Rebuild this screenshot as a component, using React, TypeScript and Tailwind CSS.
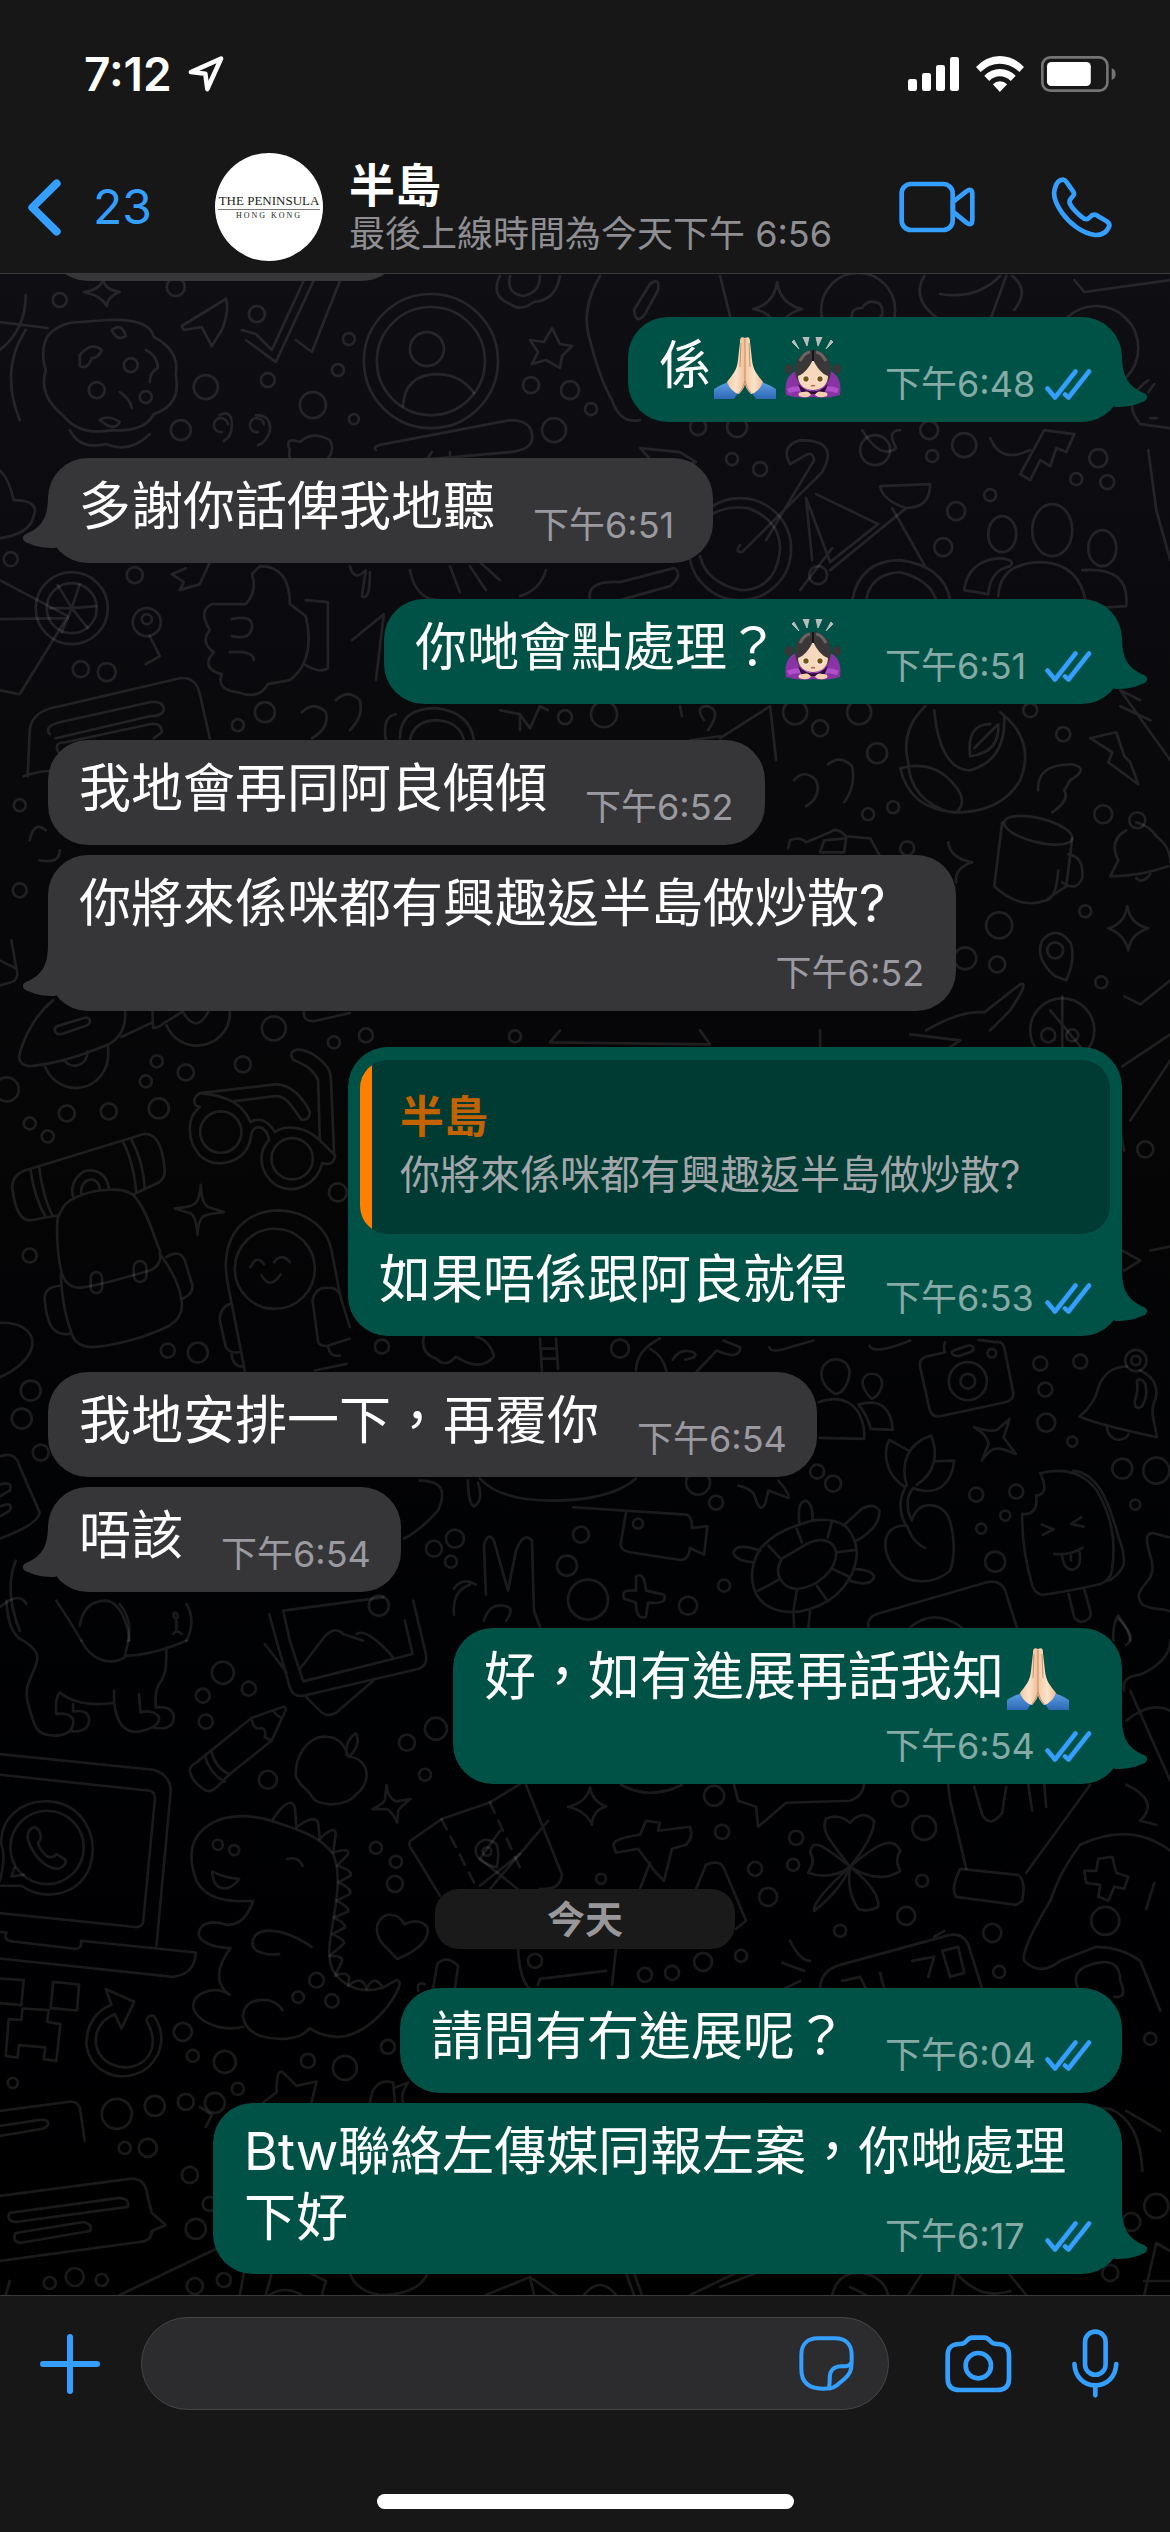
import React from 'react';
import clsx from 'clsx';

type Part = string | { emoji: 'pray' | 'bow' };

interface Message {
  id: number;
  out?: boolean;
  parts: Part[];
  time: string;
  // where the time sits relative to the text
  layout?: 'inline' | 'below' | 'wrap';
  tail?: boolean;
  quote?: { name: string; text: string };
}

const EARLIER: Message[] = [
  { id: 1, out: true, parts: ['係', { emoji: 'pray' }, { emoji: 'bow' }], time: '下午6:48', tail: true },
  { id: 2, parts: ['多謝你話俾我地聽'], time: '下午6:51', tail: true },
  { id: 3, out: true, parts: ['你哋會點處理？', { emoji: 'bow' }], time: '下午6:51', tail: true },
  { id: 4, parts: ['我地會再同阿良傾傾'], time: '下午6:52' },
  { id: 5, parts: ['你將來係咪都有興趣返半島做炒散?'], time: '下午6:52', layout: 'below', tail: true },
  {
    id: 6,
    out: true,
    parts: ['如果唔係跟阿良就得'],
    time: '下午6:53',
    tail: true,
    quote: { name: '半島', text: '你將來係咪都有興趣返半島做炒散?' },
  },
  { id: 7, parts: ['我地安排一下，再覆你'], time: '下午6:54' },
  { id: 8, parts: ['唔該'], time: '下午6:54', tail: true },
  { id: 9, out: true, parts: ['好，如有進展再話我知', { emoji: 'pray' }], time: '下午6:54', layout: 'below', tail: true },
];

const TODAY: Message[] = [
  { id: 10, out: true, parts: ['請問有冇進展呢？'], time: '下午6:04' },
  { id: 11, out: true, parts: ['Btw聯絡左傳媒同報左案，你哋處理下好'], time: '下午6:17', layout: 'wrap', tail: true },
];

/* --- Emoji --- */

const PrayEmoji = () => (
  <svg viewBox="0 0 66 62" className="inline-block w-[66px] h-[62px] mx-px -mt-1 align-middle" role="img" aria-label="🙏🏻">
    <defs>
      <linearGradient id="skin" x1="0" x2="1">
        <stop offset="0" stopColor="#f3c9a4" />
        <stop offset="0.5" stopColor="#fce3cb" />
        <stop offset="1" stopColor="#eebd94" />
      </linearGradient>
      <linearGradient id="cuff" x1="0" y1="0" x2="0" y2="1">
        <stop offset="0" stopColor="#5aa0e6" />
        <stop offset="1" stopColor="#2f68b4" />
      </linearGradient>
    </defs>
    <path d="M2 52C8 48 12 47 16 45L26 56L22 62H2ZM64 52C58 48 54 47 50 45L40 56L44 62H64Z" fill="url(#cuff)" />
    <path d="M33 1C29 -1 28 1 28 5L26 23C25 34 20 38 15 45Q19 55 27 57Q32 52 33 47Z" fill="url(#skin)" />
    <path d="M33 1C37 -1 38 1 38 5L40 23C41 34 46 38 51 45Q47 55 39 57Q34 52 33 47Z" fill="url(#skin)" />
    <path d="M33 2V44Q31 52 27 56M33 44Q35 52 39 56M29 6L28 30M37 6L38 30" fill="none" stroke="#c98f67" strokeWidth="1" />
  </svg>
);

const BowEmoji = () => (
  <svg viewBox="0 0 66 62" className="inline-block w-[66px] h-[62px] mx-px -mt-1 align-middle" role="img" aria-label="🙇🏻‍♀️">
    <path d="M12 5L14 3L19 12ZM23 0H29L27 9ZM36 0H42L38 9ZM51 3L53 5L46 12Z" fill="#b9bcbd" stroke="#b9bcbd" />
    <ellipse cx="9" cy="32" rx="4" ry="5" fill="#3a3536" />
    <ellipse cx="57" cy="32" rx="4" ry="5" fill="#3a3536" />
    <path d="M6 58C4 46 8 36 17 34H49C58 36 62 46 60 58Q48 62 33 60Q18 62 6 58Z" fill="#8a33a4" />
    <path d="M8 54Q20 49 30 55M58 54Q46 49 36 55" stroke="#b04fcc" strokeWidth="5" fill="none" />
    <path d="M18 47Q33 62 48 47L44 57H22Z" fill="#2d0d36" />
    <ellipse cx="33" cy="33" rx="18" ry="20" fill="#3b3738" />
    <path d="M18 39C24 37 30 30 33 22C36 30 42 37 48 39C48 48 41 53 33 53S18 48 18 39Z" fill="#f8d8bd" />
    <path d="M33 13V24" stroke="#161415" strokeWidth="2" />
    <path d="M20 24Q24 16 30 15M46 24Q42 16 36 15" stroke="#6b6566" strokeWidth="3" fill="none" />
    <circle cx="26" cy="42" r="3.5" fill="#fff" />
    <circle cx="40" cy="42" r="3.5" fill="#fff" />
    <circle cx="26" cy="42" r="2.7" fill="#79520f" />
    <circle cx="40" cy="42" r="2.7" fill="#79520f" />
    <path d="M31 49Q33 48 35 49" stroke="#b4705a" strokeWidth="1.5" fill="none" />
    <path d="M19 59Q17 55 23 55Q29 53 31 58Q27 62 19 59ZM47 59Q49 55 43 55Q37 53 35 58Q39 62 47 59Z" fill="#f6cfae" />
  </svg>
);

/* --- Icons --- */

const ReadTicks = () => (
  <svg viewBox="0 0 47 31" className="w-[47px] h-[31px] shrink-0" fill="none" stroke="#349fff" strokeWidth="4.5" strokeLinecap="round" strokeLinejoin="round">
    <path d="M2.5 19.5L10 28.5L30.5 2.5M20 25.5L23.5 28.5L44 2.5" />
  </svg>
);

const LocationIcon = () => (
  <svg viewBox="-2 0 110 110" className="w-9 h-9" fill="none" stroke="currentColor" strokeWidth="14" strokeLinejoin="round">
    <path d="M7 49L99 8L57 101L51 54Z" />
  </svg>
);

const SignalIcon = () => (
  <svg viewBox="141 81 153 102" className="w-[51px] h-[34px]" fill="#fff">
    <rect x="141" y="147" width="27" height="36" rx="7" />
    <rect x="183" y="129" width="27" height="54" rx="7" />
    <rect x="225" y="105" width="27" height="78" rx="7" />
    <rect x="267" y="81" width="27" height="102" rx="7" />
  </svg>
);

const WifiIcon = () => (
  <svg viewBox="345 75 145 108" className="w-12 h-9" fill="#fff">
    <path d="M345 108Q375 76 417 75Q460 76 490 108L476 123Q449 98 417 98Q385 98 359 123Z" />
    <path d="M370 134Q390 115 417 114Q445 115 465 134L450 150Q435 136 417 136Q399 136 385 150Z" />
    <path d="M396 160Q405 151 417 151Q430 151 439 160L417 183Z" />
  </svg>
);

const BatteryIcon = () => (
  <svg viewBox="540 78 226 108" className="w-[75px] h-9">
    <rect x="544" y="82" width="196" height="100" rx="24" fill="none" stroke="#747474" strokeWidth="8" />
    <rect x="558" y="96" width="132" height="72" rx="13" fill="#fff" />
    <path d="M753 115Q765 119 765 132Q765 145 753 150Z" fill="#747474" />
  </svg>
);

const BackIcon = () => (
  <svg viewBox="84 445 100 170" className="w-[33px] h-[57px]" fill="none" stroke="currentColor" strokeWidth="24" strokeLinecap="round" strokeLinejoin="round">
    <path d="M171 457L97 530L171 603" />
  </svg>
);

const VideoIcon = () => (
  <svg viewBox="115 444 228 156" className="w-[76px] h-[52px]" fill="none" stroke="currentColor" strokeWidth="14" strokeLinejoin="round">
    <rect x="123" y="453" width="153" height="138" rx="28" />
    <path d="M277 507L317 475Q335 463 335 484V560Q335 581 317 569L277 536Z" />
  </svg>
);

const PhoneIcon = () => (
  <svg viewBox="569 431 182 182" className="w-[61px] h-[61px]" fill="none" stroke="currentColor" strokeWidth="14" strokeLinejoin="round">
    <path d="M580 468C584 449 594 439 605 439Q612 440 616 447L635 474Q641 483 633 490Q622 500 625 510C632 525 654 547 669 556Q678 559 685 551Q694 540 705 545L735 563Q747 572 741 582C733 598 717 605 700 604C663 600 625 570 602 538C586 515 573 491 580 468Z" />
  </svg>
);

const PlusIcon = () => (
  <svg viewBox="0 0 60 60" className="w-[60px] h-[60px]" stroke="currentColor" strokeWidth="6" strokeLinecap="round">
    <path d="M30 3V57M3 30H57" />
  </svg>
);

const StickerIcon = () => (
  <svg viewBox="294 138 165 165" className="w-[55px] h-[55px]" fill="none" stroke="currentColor" strokeWidth="12" strokeLinejoin="round">
    <path d="M351 145H402C434 145 452 163 452 195V215C452 241 447 253 430 267L407 286C394 296 384 296 365 296C322 296 301 277 301 238V195C301 163 319 145 351 145Z" />
    <path d="M384 292C388 276 384 258 389 247C395 233 409 229 422 229C436 229 446 229 451 218" />
  </svg>
);

const CameraIcon = () => (
  <svg viewBox="735 129 199 174" className="w-[67px] h-[58px]" fill="none" stroke="currentColor" strokeWidth="14" strokeLinejoin="round">
    <path d="M742 190C742 166 754 157 777 156C803 157 796 137 816 137H852C872 137 865 157 891 156C915 157 926 166 926 190V260C926 284 913 294 889 294H779C755 294 742 284 742 260Z" />
    <circle cx="834" cy="221" r="38" />
  </svg>
);

const MicIcon = () => (
  <svg viewBox="1115 119 141 208" className="w-[47px] h-[69px]" fill="none" stroke="currentColor" strokeWidth="14" strokeLinecap="round">
    <rect x="1154" y="127" width="62" height="130" rx="31" />
    <path d="M1122 225C1124 264 1151 289 1185 289S1246 264 1248 225M1185 289V319" />
  </svg>
);

/* --- Wallpaper --- */

const DOTS = [
  [60, 300, 7], [176, 287, 9], [257, 314, 8], [349, 339, 6], [338, 370, 6], [268, 380, 7], [206, 387, 12], [181, 430, 10],
  [313, 405, 13], [354, 419, 5], [531, 385, 8], [570, 390, 9], [591, 409, 6], [554, 430, 12], [698, 427, 8], [737, 427, 10],
  [929, 430, 9], [964, 445, 12], [732, 459, 6], [760, 469, 7], [932, 456, 6], [990, 495, 6], [956, 511, 9], [943, 547, 9],
  [1098, 458, 9], [1076, 479, 6], [1107, 482, 7], [135, 575, 8], [81, 669, 8], [107, 672, 9], [11, 559, 7], [265, 712, 10],
  [238, 725, 6], [565, 717, 7], [604, 714, 13], [795, 712, 12], [820, 728, 8], [859, 712, 12], [877, 753, 10], [1030, 710, 7],
  [1063, 734, 7], [868, 814, 6], [893, 807, 6], [1103, 814, 9], [907, 848, 7], [20, 805, 6], [20, 890, 7], [999, 925, 13],
  [965, 958, 11], [997, 964, 8], [1085, 911, 6], [1101, 982, 6], [274, 1028, 12], [334, 1042, 6], [157, 1061, 6], [146, 1081, 6],
  [186, 1072, 8], [243, 1064, 8], [159, 1108, 10], [109, 1111, 8], [67, 1113, 8], [30, 1123, 6], [48, 1136, 6], [7, 1089, 12],
  [338, 1192, 9], [30, 1255, 7], [168, 1350, 7], [198, 1352, 10], [382, 1346, 7], [620, 1348, 9], [1040, 1363, 7], [1080, 1361, 7],
  [1045, 1389, 7], [1046, 1422, 9], [1072, 1441, 5], [31, 1390, 10], [22, 1418, 10], [41, 1452, 8], [1122, 1468, 10], [1156, 1470, 13],
  [698, 1482, 12], [716, 1502, 7], [817, 1471, 7], [833, 1483, 8], [976, 1494, 7], [1016, 1491, 7], [1005, 1515, 5], [981, 1528, 5],
  [995, 1561, 10], [1135, 1504, 5], [724, 1585, 6], [688, 1605, 9], [581, 1534, 8], [455, 1538, 9], [434, 1548, 8], [451, 1561, 6],
  [567, 1565, 10], [379, 1605, 10], [223, 1672, 11], [249, 1688, 7], [203, 1695, 7], [206, 1721, 7], [407, 1742, 8], [436, 1728, 11],
  [425, 1774, 6], [268, 1779, 9], [714, 1795, 10], [900, 1798, 8], [376, 1847, 6], [396, 1861, 6], [395, 1883, 8], [722, 1831, 7],
  [796, 1837, 7], [755, 1868, 7], [793, 1864, 6], [924, 1827, 12], [601, 1878, 5], [768, 1896, 9], [922, 1880, 6], [906, 1915, 9],
  [840, 1930, 6], [992, 1932, 9], [999, 1971, 6], [703, 1961, 9], [741, 1955, 6], [645, 1974, 7], [672, 1972, 7], [535, 1960, 7],
  [183, 2031, 9], [193, 2055, 6], [225, 2061, 11], [308, 2060, 7], [345, 2067, 12], [388, 2046, 7], [13, 2082, 5], [117, 2113, 15],
  [155, 2105, 10], [186, 2101, 8], [215, 2102, 10], [238, 2088, 6], [1150, 2038, 6], [148, 2147, 9], [125, 2147, 6], [190, 2174, 8],
  [196, 2228, 10], [210, 2203, 7], [75, 2276, 9], [50, 2282, 6], [102, 2279, 6], [195, 2285, 8], [224, 2279, 7], [1156, 2205, 12],
  [1131, 2221, 9], [1110, 2272, 8], [1145, 1149, 8], [1072, 1035, 6], [1048, 1035, 7], [515, 1036, 6], [366, 1035, 7],
];

const Wallpaper = () => (
  <svg
    viewBox="0 274 1170 2020"
    preserveAspectRatio="xMidYMid slice"
    className="absolute inset-0 w-full h-full"
    fill="none"
    stroke="#ffffff"
    strokeOpacity="0.1"
    strokeWidth="2.7"
    strokeLinecap="round"
    strokeLinejoin="round"
    aria-hidden="true"
  >
    {DOTS.map(([x, y, r]) => (
      <circle key={`${x}-${y}`} cx={x} cy={y} r={r} />
    ))}

    {/* cookie, contact disc, ticks, stars */}
    <path d="M48 336Q60 322 80 322L108 320Q150 318 154 337Q180 350 176 375Q182 405 154 414Q145 432 112 430Q80 436 64 416Q38 395 46 370Q40 350 48 336Z" />
    <path d="M80 355q12 -14 22 -5q-4 8 -10 8q-4 12 -12 8ZM112 330q10 -8 14 6q-8 6 -14 -6M146 350q12 6 12 18q-8 4 -8 14M120 392q10 6 12 16M100 420q8 -6 20 2q-6 10 -20 -2" />
    <circle cx="131" cy="365" r="7" /><circle cx="97" cy="390" r="8" /><circle cx="146" cy="397" r="6" />
    <path d="M0 322L48 328M26 295Q26 330 0 350M26 330Q0 370 20 420" />
    <circle cx="431" cy="361" r="67" /><circle cx="431" cy="361" r="54" /><circle cx="427" cy="349" r="17" />
    <path d="M403 406Q405 374 438 374Q462 375 474 393" />
    <path d="M182 326L226 299Q230 310 222 330L212 346L202 327L184 330Z" />
    <path d="M242 330L256 334L272 350L306 276L314 280L276 362L246 340M296 340L312 352L342 276M308 276L346 278" />
    <path d="M552 328L560 344L572 346L562 356L560 368L546 360L532 364L538 352L530 340L544 342Z" />
    <path d="M777 282Q780 304 802 309Q782 314 777 334Q774 312 753 309Q774 304 777 282Z" />
    <path d="M103 280Q106 290 120 292Q108 296 107 306Q102 296 84 292Q100 290 103 280Z" />
    <path d="M500 276Q490 296 510 304Q520 312 534 302Q556 300 560 276M510 276Q506 294 524 296Q540 292 540 276" />
    <path d="M600 276Q580 310 590 340Q600 380 612 400Q620 424 640 420M634 310L650 284Q660 276 658 290L645 314Q636 326 634 310M720 276L730 316" />
    <circle cx="858" cy="310" r="37" /><path d="M852 318Q850 308 862 308Q868 298 880 304Q888 318 870 322" />
    <path d="M924 276Q910 300 940 320Q960 350 990 320L1006 276M940 294Q976 300 1000 276M1012 276Q1030 290 1014 310M1074 280L1084 292L1170 280" />
    <circle cx="1096" cy="348" r="42" /><path d="M1148 380Q1120 400 1140 424L1170 428M1148 392l6 -8M1150 418h6" />
    <path d="M220 415q12 -6 12 10q0 12 -8 16M256 415q16 0 14 16q-4 12 -12 14M228 424a7 7 0 1 0 -6 8M264 424a7 7 0 1 0 -6 8" />
    <path d="M70 430Q80 450 106 444Q130 454 150 434M290 450Q284 436 300 442Q312 430 330 440Q340 460 304 470Q286 462 290 450Z" />
    <path d="M376 450Q372 446 384 444L510 420Q534 420 532 440Q530 450 510 452L396 462M428 458l4 -6M450 455v-3" />
    <path d="M0 470Q10 480 14 500Q40 500 34 516Q30 534 0 538M640 448L680 452L696 462L660 470L642 450" />

    {/* bicycle and people */}
    <circle cx="740" cy="549" r="51" /><path d="M700 526Q715 504 748 508Q780 520 780 549Q776 590 740 590Q706 582 700 556" />
    <path d="M740 545Q734 552 742 552L822 472Q840 440 800 440Q780 446 790 464L804 456Q812 450 814 460L766 540M816 494L878 524L830 562L806 498L812 560M880 486L930 484Q930 508 906 508Q882 500 880 486M906 508L830 570M800 590L832 548" />
    <path d="M852 600Q860 560 900 560Q944 566 950 600M866 600Q870 574 900 572Q930 580 936 600M892 508L926 568" />
    <circle cx="818" cy="575" r="9" />
    <ellipse cx="1052" cy="530" rx="20" ry="26" /><ellipse cx="1002" cy="534" rx="14" ry="18" /><ellipse cx="1102" cy="548" rx="14" ry="18" />
    <path d="M998 596Q1000 562 1042 562Q1080 564 1086 604M964 590Q968 560 1000 558Q1016 560 1010 566Q990 570 988 594ZM1082 570Q1130 566 1126 606L1096 608" />
    <path d="M1020 474L1044 430L1074 434L1066 452L1056 448L1050 466L1040 460L1030 480ZM990 438Q1000 464 1030 450M1148 450L1156 510L1170 560" />
    <circle cx="875" cy="450" r="15" /><path d="M862 430Q880 460 896 448Q886 430 900 430" />

    {/* drink, thumb, quotes */}
    <path d="M0 580L68 616L20 694L0 690M0 619L68 618" /><circle cx="72" cy="608" r="36" /><circle cx="72" cy="608" r="25" />
    <path d="M72 608L58 585M72 608L80 584M72 608L96 606M72 608L88 628M72 608L62 632M72 608L50 608" />
    <path d="M246 604Q258 590 252 574L260 566Q290 566 290 604L306 616Q316 660 290 680L268 684Q260 700 238 692Q216 690 222 674Q200 668 214 652Q200 642 210 630Q198 610 212 604ZM232 619Q254 614 252 628Q250 640 232 636M230 652Q254 650 254 660M306 600L328 602V668Q320 674 304 664" />
    <path d="M186 568L172 574L184 582L180 590L200 584L210 562M350 566Q354 582 366 570L362 596Q370 602 370 572M410 570Q416 600 440 600M450 566L460 592M470 566L486 590M480 562L500 580M546 570Q540 590 520 596" />
    <circle cx="147" cy="622" r="14" /><circle cx="147" cy="619" r="5" /><path d="M150 636L160 656L146 664" />
    <path d="M590 600Q586 580 620 582L674 568Q684 574 670 586L620 600M352 640L384 614L376 680" />
    <path d="M28 776L30 730Q32 710 60 706L180 678Q196 676 200 694L210 738M24 776Q40 770 60 770M50 734Q44 726 60 722L150 702Q164 700 164 710Q162 716 150 716L56 738M60 754Q52 742 66 742L150 724Q162 722 162 732L154 738" />
    <path d="M302 712q12 -12 24 0q4 16 -14 26M336 700q12 -12 24 0q4 16 -10 30M386 740q-4 -24 10 -26M400 738Q400 708 436 708Q470 712 474 740M410 740Q414 720 438 720Q460 722 464 740" />
    <path d="M500 710L520 714L530 728L540 706L548 710M520 714V730M680 706L682 716M690 740L720 736M720 738L770 706L776 760M704 720q-10 -14 4 -14q14 4 0 24" />

    {/* avocado, mug, bell, lightning */}
    <path d="M925 706Q900 730 908 762Q910 800 950 812Q1000 814 1020 780Q1036 740 1000 712M934 710Q940 770 970 770Q1006 760 1004 716M900 768Q930 760 950 780Q970 800 956 812Q910 810 900 768Z" />
    <path d="M990 724Q966 724 970 756Q1000 752 998 724L974 748" />
    <path d="M1090 738L1116 732L1124 756L1130 762L1138 784L1108 762L1112 752ZM1038 790Q1036 764 1072 764Q1090 768 1070 780L1064 790Q1070 800 1052 812" />
    <path d="M794 780q10 -12 22 0q6 16 -10 26M828 764q12 -10 24 2q4 20 -8 36M1140 700L1120 690L1170 760M1120 706L1150 720" />
    <ellipse cx="1038" cy="830" rx="35" ry="12" transform="rotate(14 1038 830)" /><path d="M1002 822L994 886Q1020 910 1046 900Q1056 898 1058 870M1072 838L1066 886Q1050 896 1046 900M1068 854Q1084 856 1082 878Q1076 892 1062 882" />
    <path d="M1126 830Q1108 840 1118 860L1110 876Q1140 876 1168 866M1136 822Q1150 826 1156 836Q1170 846 1170 862M1136 878Q1142 884 1150 874" /><circle cx="1137" cy="820" r="8" />
    <path d="M788 848L790 840Q800 836 806 842L830 832Q836 826 846 836L870 838L880 856M820 852L824 840L846 838L844 852Z" />
    <path d="M948 842Q950 858 972 862Q954 868 956 882M1127 906Q1130 924 1148 928Q1130 934 1128 950Q1124 934 1108 928Q1124 924 1127 906Z" />
    <path d="M1055 976Q1034 958 1042 940Q1056 924 1070 942Q1076 958 1066 980Z" /><circle cx="1055" cy="950" r="8" />
    <path d="M926 1030Q960 1010 984 1012L1020 984Q1030 980 1010 1010L990 1030" /><circle cx="1062" cy="1030" r="32" />
    <path d="M1124 996L1140 1004L1170 980M1050 1010L1080 1046M1062 996V1060" />
    <path d="M30 840Q34 820 46 830M40 860Q60 864 60 850M560 1030L550 1042L710 1044L700 1030M820 1030V1046M910 1034L960 1040L930 1060M1122 1066L1170 1034M1130 1120L1170 1060M1124 1150L1120 1130M1122 1250L1140 1260L1124 1270M1150 1250L1170 1246" />

    {/* car, glasses, backpack, person */}
    <g transform="translate(0 940) scale(0.3333)" strokeWidth="8">
      <path d="M160 180C110 220 70 290 58 350Q60 375 90 377C180 370 260 340 330 310Q380 280 376 213M165 270Q165 258 180 255L255 232Q272 230 270 245Q268 255 250 259L188 280Q168 285 165 270ZM133 372C150 420 190 443 229 443C290 440 335 390 324 315M195 358C205 385 262 385 263 333M365 290L460 245M458 215L460 262Q470 265 490 250L550 213" />
      <path d="M500 255C520 300 560 316 590 316C650 314 692 270 690 215M553 220Q590 280 625 215M912 215Q910 245 945 242L1050 218" />
      <path d="M600 500C560 530 560 600 600 645C650 690 730 665 748 610C756 590 750 565 775 560Q800 560 808 598C770 640 780 700 830 735C890 765 950 730 968 668Q1000 680 1006 645L960 600C920 560 860 550 825 575C805 540 775 530 752 545C730 490 680 465 600 458Q575 475 588 495ZM600 458L825 432C870 430 910 470 930 515Q930 540 905 538C880 505 860 460 820 468L705 482M960 600L955 420C940 385 910 370 880 358Q865 335 890 328C930 325 990 370 993 410L1003 645" />
      <circle cx="663" cy="575" r="62" /><circle cx="877" cy="655" r="62" />
      <path d="M603 733Q605 790 625 800L672 815Q620 820 608 830Q595 845 593 882Q590 835 575 820L525 804Q580 800 590 785Q600 770 603 733Z" />
      <path d="M405 760L475 727Q495 715 495 690C490 640 480 580 435 580L75 690Q35 705 38 745C45 800 60 840 90 840L170 825M92 688Q105 775 138 830M118 680Q130 770 158 825M370 605Q400 660 410 757M395 598Q430 660 435 745" />
      <path d="M190 800C210 770 270 750 330 748Q390 745 410 775C440 810 460 880 480 930Q490 975 450 990C380 1010 300 1035 240 1042Q200 1040 187 1000C170 940 170 850 175 830ZM183 1000C185 1060 195 1130 220 1190Q235 1220 280 1220C350 1215 440 1190 510 1155Q550 1130 546 1085C540 1030 510 980 480 940M183 1035Q130 1040 135 1080C140 1130 150 1190 210 1180M500 950Q540 925 555 960L578 1035Q580 1060 548 1075M222 775C205 730 240 690 270 690C310 690 325 720 328 748M245 765C235 710 300 700 300 750" />
      <rect x="273" y="995" width="34" height="63" rx="17" /><rect x="402" y="962" width="38" height="62" rx="18" />
      <path d="M735 1290L682 1020C660 880 740 810 840 810C930 815 985 870 995 930L1020 1060M692 1090Q660 1100 660 1140L678 1220Q690 1240 720 1235M695 1240Q700 1280 730 1278M752 980Q770 940 793 972M823 965Q845 935 870 965M785 1005Q810 1050 842 1002M955 1205L938 1080Q945 1040 985 1042Q1020 1040 1025 1080L1050 1160M955 1205Q965 1220 985 1215L1050 1195M985 1220Q990 1250 1020 1245M945 1290L1040 1270" />
      <circle cx="825" cy="985" r="120" />
      <path d="M0 1147C60 1145 100 1170 98 1210C95 1250 50 1290 0 1310M0 60L50 85L35 0M50 85Q60 120 30 127L0 135" />
    </g>

    {/* camera, bell, turtle, flower, ice cream */}
    <g transform="translate(650 1340) scale(0.3333)" strokeWidth="8">
      <path d="M885 5Q878 20 885 35L830 48Q805 55 810 80L838 205Q845 232 870 227L1065 185Q1095 178 1088 150L1062 20Q1055 0 1035 5L985 -2M915 28L955 15Q972 15 970 28Q965 35 950 38L925 47Q905 45 905 35Z" />
      <circle cx="953" cy="122" r="57" /><circle cx="953" cy="122" r="22" /><circle cx="1025" cy="38" r="13" />
      <path d="M1430 78Q1365 80 1345 140C1335 185 1310 210 1288 228Q1340 252 1520 290C1515 250 1500 220 1510 190C1530 150 1515 110 1470 90M1370 262Q1375 295 1405 298Q1430 295 1435 280M1460 120Q1475 110 1485 130Q1495 165 1475 198Q1455 210 1453 185Q1465 150 1460 120" />
      <circle cx="1457" cy="60" r="32" /><circle cx="1457" cy="60" r="14" />
      <path d="M555 160C520 140 510 110 515 90C525 45 590 45 598 90C600 120 580 160 555 160ZM664 175C640 150 635 135 638 120C645 92 690 92 696 125C698 145 680 170 664 175ZM505 185C560 165 600 180 625 215C640 245 645 270 642 295L508 292M625 192Q720 165 728 268L662 265Q650 220 625 192Z" />
      <path d="M1078 235Q1070 265 1060 290L1097 340Q1050 320 1035 325Q1020 325 995 360L1015 310Q1010 280 972 260Q1020 275 1040 268Z" />
      <path d="M765 440C700 400 700 330 718 298L775 330M770 435C750 370 770 310 843 285C865 340 855 400 800 432M855 362L912 360C905 430 860 470 790 442M765 440C745 480 750 520 765 550M790 442C765 470 770 510 785 540C800 480 870 480 895 530C915 580 915 650 900 690C850 735 770 730 740 690C690 640 690 550 770 555C780 580 790 605 825 622" />
      <path d="M455 550C500 530 560 535 590 560C640 620 620 690 580 740C530 800 430 835 360 800C300 770 290 690 330 625C360 590 400 565 455 550ZM470 610C510 590 550 595 558 635C560 690 500 740 440 745C390 740 370 695 395 655ZM440 565L455 605M545 545L533 590M560 635L620 628M548 685L600 710M500 735L532 780M440 750L430 810M385 718L325 750M355 615L392 655M448 550Q440 480 468 480Q490 490 487 540M580 555L635 505Q670 485 688 510Q690 560 620 600M615 685Q670 690 672 710Q660 740 600 720M330 630Q260 605 250 635Q255 660 308 665M430 815L432 860M480 810L475 860" />
      <path d="M1170 398Q1280 370 1340 450C1380 520 1400 590 1385 690Q1380 720 1350 730C1290 745 1230 755 1175 763Q1150 755 1145 730C1125 660 1115 590 1116 520Q1165 525 1158 465Q1200 460 1170 398ZM1270 390C1350 400 1380 500 1405 590Q1425 640 1420 675Q1400 710 1375 720M1255 760L1272 830Q1290 855 1315 835Q1325 825 1320 810L1302 745M1175 552L1210 566L1178 583M1293 530L1263 550L1300 558M1212 640Q1260 645 1297 622M1235 640Q1240 690 1270 687Q1295 680 1288 635M1262 645V660" />
      <path d="M1560 590C1520 585 1500 565 1490 590C1490 640 1520 670 1500 710C1480 740 1450 760 1475 790C1500 810 1530 800 1560 812M655 860Q650 830 680 820L1010 725Q1050 715 1065 750L1100 860M780 860Q850 800 935 860M1400 830Q1450 880 1440 900M1400 830Q1385 870 1390 900" />
      <path d="M-230 500L110 522Q128 530 125 562L172 557L162 642L120 622Q115 660 90 658L-60 635Q-90 630 -88 610L-72 515M265 435Q310 445 315 470Q330 520 345 490L355 450L415 472Q420 460 385 420M0 25Q40 45 50 95M68 58Q90 20 130 35Q150 50 105 57M140 93L200 30Q270 60 270 20L220 0M358 20Q360 40 420 20L490 0M658 15Q670 45 780 0" />
    </g>

    {/* odds and ends around the middle */}
    <path d="M424 1336Q420 1352 436 1358Q446 1368 456 1356Q480 1372 494 1356Q490 1340 476 1336M540 1338L542 1370M556 1338L558 1368M541 1348H556M541 1358H557M636 1370Q636 1350 660 1338" />
    <path d="M480 1478Q500 1500 552 1500Q610 1500 636 1478M468 1480Q468 1502 474 1506Q484 1500 478 1482M420 1480Q452 1480 438 1510Q420 1530 404 1538" />
    <circle cx="638" cy="1523" r="5" />
    <path d="M484 1620Q490 1600 508 1606Q514 1610 506 1620M486 1594L484 1545Q488 1530 494 1540L508 1590L516 1550Q524 1530 532 1540L534 1610L540 1626M470 1584Q452 1590 454 1614M454 1588Q462 1576 476 1584" />
    <circle cx="588" cy="1599" r="20" /><path d="M636 1576Q644 1570 646 1590L664 1594Q668 1604 648 1602L646 1616Q636 1620 636 1602L624 1598Q620 1588 636 1590Z" />
    <path d="M0 1456Q16 1450 20 1466L40 1512Q38 1524 0 1538M0 1484Q14 1480 10 1490L0 1496M0 1506Q14 1500 10 1510L0 1516M16 1560Q4 1590 20 1630M80 1625Q84 1600 106 1600Q124 1602 130 1640" />

    {/* dog, laptop, dinosaur, pencil, apple */}
    <g transform="translate(0 1640) scale(0.3333)" strokeWidth="8">
      <path d="M20 -120Q25 -20 70 0Q120 30 112 60C100 110 70 130 85 190C105 250 100 290 180 284Q225 275 220 235Q205 215 170 220Q165 170 180 155C220 190 280 195 343 187C350 240 370 280 420 272Q480 260 478 230Q460 205 422 215L418 160M343 150V187M220 190V212Q270 205 268 240Q265 275 215 272M500 20C500 80 500 100 475 135Q465 160 468 200Q520 195 522 230Q520 270 465 262M245 0C270 50 320 80 375 50L385 0M375 45C440 45 500 25 560 0" />
      <path d="M0 -100Q60 -150 80 -110M170 -120Q210 -60 245 0M385 0Q400 -60 360 -110M560 0Q590 -60 560 -110M520 -80q14 -10 14 10q-10 10 -14 -10M530 -60V-30M520 -20Q530 -35 545 -20" />
      <path d="M0 340L460 387Q510 400 513 450L470 915M0 402L450 450Q468 455 465 480L430 845Q425 862 400 858L0 817M0 873L20 875Q10 900 40 902L225 924Q248 925 243 900L588 935Q585 1000 520 1008L0 953" />
      <circle cx="142" cy="620" r="110" /><path d="M0 735L65 735C130 780 230 770 270 680C300 590 250 490 150 482C60 475 0 540 5 610Q20 650 0 720M45 680L35 707L72 702" />
      <path d="M100 560Q85 565 83 590C95 640 140 690 180 683Q205 670 195 655L170 640Q160 655 140 645Q115 620 115 605Q130 595 118 570Q110 558 100 560Z" />
      <path d="M570 390Q570 375 590 365L755 232L850 198Q860 198 857 210L815 300L690 400L650 440Q635 455 620 450Q575 425 570 390ZM755 232Q760 270 785 262Q800 265 795 290L815 300M820 210Q830 225 845 232M615 345Q630 400 675 423M635 332Q645 380 690 402" />
      <path d="M1045 348Q1030 290 980 288C920 285 885 350 888 405C900 440 920 440 935 465C950 500 1040 500 1070 460C1120 420 1105 350 1045 348ZM1040 342Q1035 300 1068 277Q1085 310 1050 346" />
      <path d="M1160 433Q1165 475 1190 482L1232 475Q1200 500 1195 510L1192 545Q1175 510 1160 505L1118 505Q1150 490 1155 478Z" />
      <path d="M760 780C680 785 620 775 590 720C560 640 575 580 640 545C690 520 760 520 830 545C900 570 960 585 1000 640C1025 700 1010 780 1000 840C990 900 980 950 1000 990C1030 1040 1090 1060 1150 1040L1190 1018Q1205 1020 1195 1045C1160 1120 1080 1190 1010 1188Q960 1185 930 1162C900 1200 830 1200 780 1185C720 1160 715 1100 760 1082Q820 1065 848 1108M730 1158C660 1175 590 1140 580 1100C580 1050 650 1035 690 1062C640 1030 655 970 692 922C640 920 600 905 597 880C600 840 640 840 680 852Q735 855 760 780M935 918C880 880 800 850 765 885C740 930 790 945 838 940M637 692Q670 710 718 715C690 755 640 755 637 692ZM862 655Q895 645 908 675" />
      <circle cx="654" cy="612" r="15" /><circle cx="703" cy="628" r="15" /><circle cx="950" cy="1018" r="22" /><circle cx="895" cy="1069" r="17" /><circle cx="996" cy="1080" r="20" />
      <path d="M820 535Q870 460 885 500L890 560Q940 520 955 545L960 595Q1005 550 1008 580L1000 635Q1050 620 1045 640L1012 675Q1060 690 1052 705L1015 725Q1060 745 1050 760L1010 780Q1050 800 1045 812L1002 830Q1040 850 1035 860L998 880Q1040 900 1030 910L990 945Q1035 945 1025 965L1005 1005Q1040 990 1048 1010L1045 1035Q1090 1000 1100 1045Q1120 1000 1145 1035" />
      <path d="M1192 955L1145 905C1120 870 1130 830 1165 822Q1200 820 1213 850Q1260 830 1283 860C1290 900 1250 930 1192 955Z" />
      <path d="M0 1013L72 1018L65 1093L0 1087M160 1023L238 1031L232 1109L153 1102ZM68 1103L147 1108L142 1143L182 1150L170 1260L132 1255L137 1220L58 1213L53 1250L18 1245L27 1135L65 1137ZM318 1045L403 1083L365 1163L345 1120C290 1140 275 1200 300 1240C340 1300 440 1290 457 1220Q465 1180 440 1140Q445 1120 462 1125C500 1180 490 1250 430 1290C350 1330 270 1290 260 1210C260 1150 290 1110 335 1092Z" />
      <path d="M1325 535L1470 485L1560 430M1325 535L1232 600Q1225 610 1232 620L1320 765M1490 680Q1420 660 1428 620Q1450 580 1490 610Q1500 640 1490 680M1440 735L1560 640" /><circle cx="1461" cy="632" r="13" />
      <path d="M1325 535L1430 740M1470 485L1560 680" strokeDasharray="34 26" />
      <path d="M795 10L860 95M830 0L870 140Q880 170 910 165L1255 85Q1285 75 1278 40L1240 -120M830 0L808 -80M870 0L910 122L1238 40L1215 -60M870 0L850 -90L1150 -130M900 85L965 0Q1000 -50 1030 -20L1090 0M1070 -20Q1100 -40 1180 50M920 170L965 215Q985 230 1010 215L1120 120M1255 1050Q1250 1020 1275 1030M1300 1040L1312 970Q1340 940 1375 975L1365 1040M790 1385L830 1355Q830 1270 855 1300L890 1335L950 1322L935 1385M1110 1385Q1120 1310 1180 1325L1185 1385M1185 1340L1225 1325Q1200 1360 1210 1385M0 1410L215 1382Q240 1385 242 1410L255 1500M0 1455L120 1437Q148 1435 145 1450Q142 1462 120 1465L0 1485" />
    </g>

    {/* map, hammer, clover, gamepad, clock */}
    <path d="M526 1784L562 1874M562 1874Q560 1890 540 1888M480 1900L548 1820M500 1830L480 1858L520 1890M590 1787Q592 1800 606 1806Q592 1810 592 1824Q586 1810 568 1806Q586 1802 590 1787Z" />
    <path d="M614 1846Q610 1838 640 1834L646 1820L660 1822L658 1830L690 1826Q694 1836 686 1844L672 1848L664 1880L656 1872L638 1848L616 1852ZM640 1888L650 1862M696 1888L706 1864Q720 1858 724 1868L746 1920L736 1928" />
    <path d="M734 1784L738 1800L756 1806L758 1826L786 1802L850 1800Q862 1796 864 1784M621 1784Q650 1800 682 1784" />
    <path d="M850 1866C830 1840 820 1830 826 1818Q838 1812 850 1822Q862 1808 874 1820Q874 1836 850 1866ZM850 1866C880 1840 894 1836 900 1850Q894 1860 900 1870Q880 1884 850 1866ZM850 1866C820 1842 812 1838 810 1852Q816 1860 808 1872Q830 1880 850 1866ZM850 1866Q880 1890 878 1906Q866 1912 858 1908Q846 1890 850 1866ZM850 1866Q840 1890 814 1910Q812 1900 850 1866Z" />
    <path d="M948 1784L950 1800L966 1868M974 1786L982 1814Q990 1828 1002 1812L1006 1786M1028 1784L1032 1810M1044 1784L1046 1806M1090 1784L1026 1872" />
    <path d="M960 1868L1018 1874Q1026 1880 1022 1900L1016 1904L956 1896Q950 1888 960 1868Z" />
    <path d="M1170 1850Q1130 1820 1080 1844Q1060 1870 1050 1900Q1020 1950 1024 1960Q1040 1976 1060 1960L1096 1946Q1120 1946 1140 1960L1160 2010M1098 1858L1112 1856L1116 1872L1128 1876L1124 1888L1114 1886L1108 1900L1098 1896L1100 1884L1086 1882L1084 1870L1096 1870ZM1146 1908L1154 1882" />
    <circle cx="1105" cy="1920" r="14" />
    <path d="M1078 1988Q1070 1970 1090 1964Q1120 1954 1120 1980Q1128 1998 1114 1996M790 1940Q800 1960 810 1960M782 1962L804 1970M780 1990L800 1980" />
    <path d="M820 1988Q820 1970 840 1964L950 1934Q966 1932 970 1950L982 1988M842 1980L860 1976L866 1988M880 1972L884 1988M912 1960L934 1956L928 1976M942 1950L958 1946L964 1972L950 1976ZM934 1936L944 1930" />
    <path d="M538 1984L540 1978L606 1970M518 1948Q520 1980 530 1988M616 1948L612 1984M1126 1784Q1160 1800 1140 1820L1156 1824M1124 1690Q1120 1676 1140 1674Q1170 1660 1170 1640M1126 1720Q1150 1700 1170 1710M1130 1690L1170 1780M1118 1615Q1136 1640 1126 1644" />

    {/* bottom notes and shapes */}
    <path d="M0 2195L130 2178Q146 2176 148 2196L152 2212L166 2224L152 2230Q152 2240 140 2241L0 2260M10 2212L120 2197Q130 2198 128 2206L16 2221Q6 2220 10 2212ZM16 2232L84 2221Q94 2224 90 2230L20 2242Q12 2240 16 2232ZM120 2294L216 2248M6 2294L10 2280M240 2294L244 2272M266 2294L272 2272M310 2272L326 2280L322 2294M270 2294Q284 2284 302 2294M350 2272Q356 2290 380 2294Q418 2294 428 2272M486 2294L530 2276L556 2294M530 2276L534 2294M584 2294Q600 2274 616 2294M626 2272L634 2294M634 2272L642 2294M690 2294L740 2270M756 2272L720 2286M832 2294Q838 2270 862 2272Q884 2276 888 2294M850 2286L866 2294M908 2294L922 2272M956 2272L952 2294M956 2272Q980 2300 1010 2290M1008 2272L1026 2294M1144 2294L1156 2242L1170 2250M1144 2280H1170" />
    <path d="M200 2106L212 2114L206 2126M1084 2106L1110 2108Q1140 2120 1142 2170M1126 2110L1160 2130" />
  </svg>
);

/* --- Chat --- */

const Tail: React.FC<{ out?: boolean }> = ({ out }) => (
  <svg
    viewBox="0 0 40 55"
    className={clsx(
      'absolute bottom-3 w-10 h-[55px]',
      out ? '-right-[26px] fill-[#005246]' : '-left-[26px] -scale-x-100 fill-[#363638]'
    )}
    aria-hidden="true"
  >
    <path d="M0 0H14C14 20 19 31 36 38Q40 40 39 43Q38 46 34 47C26 51 18 52 7 52L0 48Z" />
  </svg>
);

const Bubble: React.FC<{ message: Message }> = ({ message }) => {
  const { out, parts, time, layout = 'inline', tail, quote } = message;

  return (
    <li
      className={clsx(
        'relative max-w-[909px] rounded-[40px] pb-4 pl-[31px] pr-[30px]',
        out ? 'self-end bg-[#005246]' : 'self-start bg-[#363638]',
        quote ? 'pt-[13px]' : 'pt-4'
      )}
    >
      {tail && <Tail out={out} />}
      {quote && (
        <blockquote className="-ml-[19px] -mr-[18px] mb-[13px] flex h-[174px] overflow-hidden rounded-[28px] bg-[#003b33]">
          <div className="w-3 shrink-0 bg-[#ff8000]"></div>
          <div className="flex flex-col justify-center pb-1 pl-[28px]">
            <cite className="text-[44px] leading-[60px] font-bold not-italic text-[#c36200]">{quote.name}</cite>
            <p className="text-[40px] leading-[56px] text-[#a3a7ab] whitespace-nowrap">{quote.text}</p>
          </div>
        </blockquote>
      )}
      <div
        className={clsx(
          'text-[52px] leading-[66px] text-white',
          layout === 'inline' && 'flex items-end gap-[38px]',
          layout === 'below' && 'flex flex-col',
          layout === 'wrap' && 'flow-root'
        )}
      >
        <p
          className={clsx(
            layout === 'wrap' ? 'inline' : 'mb-[7px] whitespace-nowrap',
            layout === 'below' && (out ? 'pr-5' : 'pr-10')
          )}
        >
          {parts.map((part, i) =>
            typeof part === 'string' ? (
              <React.Fragment key={i}>{part}</React.Fragment>
            ) : part.emoji === 'pray' ? (
              <PrayEmoji key={i} />
            ) : (
              <BowEmoji key={i} />
            )
          )}
        </p>
        <div
          className={clsx(
            'flex items-center gap-2.5 self-end',
            layout === 'below' && 'mt-[7px]',
            layout === 'wrap' && 'float-right mt-[29px]'
          )}
        >
          <time className={clsx('w-[150px] text-4xl leading-[44px] whitespace-nowrap', out ? 'text-[#86aaa5]' : 'text-[#9b9aa1]')}>
            {time}
          </time>
          {out && <ReadTicks />}
        </div>
      </div>
    </li>
  );
};

// A bubble followed by one from the same sender sits closer to it
const Thread: React.FC<{ messages: Message[] }> = ({ messages }) => (
  <ul className="flex flex-col">
    {messages.map((message, i) => (
      <React.Fragment key={message.id}>
        {i > 0 && <li className={messages[i - 1].tail ? 'h-9' : 'h-2.5'} aria-hidden="true"></li>}
        <Bubble message={message} />
      </React.Fragment>
    ))}
  </ul>
);

const StatusBar = () => (
  <div className="flex items-center justify-between h-[148px] pl-[84px] pr-[54px] text-white">
    <div className="flex items-center gap-4">
      <span className="text-[46px] leading-[56px] font-semibold">7:12</span>
      <LocationIcon />
    </div>
    <div className="flex items-center gap-[17px]">
      <SignalIcon />
      <WifiIcon />
      <BatteryIcon />
    </div>
  </div>
);

const Header = () => (
  <header className="relative z-10 bg-[#171717] border-b border-[#3a3a3c]">
    <StatusBar />
    <div className="flex items-center h-[125px] pb-[7px] pl-7 pr-[58px]">
      <a href="#chats" className="flex items-center gap-8 w-[187px] shrink-0 text-[#349fff]">
        <BackIcon />
        <span className="text-[48px] leading-[60px]">23</span>
      </a>
      <div className="flex flex-col items-center justify-center w-[108px] h-[108px] shrink-0 rounded-full bg-white font-['Liberation_Serif',serif] text-[#222]">
        <span className="text-[13px] leading-[17px] whitespace-nowrap">THE PENINSULA</span>
        <span className="w-[102px] h-px bg-[#777]"></span>
        <span className="text-[8px] leading-3 tracking-[2px]">HONG KONG</span>
      </div>
      <div className="flex-1 min-w-0 pl-[26px]">
        <h1 className="text-[46px] leading-[54px] font-bold text-white">半島</h1>
        <p className="text-4xl leading-[44px] text-[#8e8e93] whitespace-nowrap">最後上線時間為今天下午 6:56</p>
      </div>
      <div className="flex items-center gap-[76px] text-[#349fff]">
        <button type="button" aria-label="視像通話"><VideoIcon /></button>
        <button type="button" aria-label="語音通話"><PhoneIcon /></button>
      </div>
    </div>
  </header>
);

const Composer = () => (
  <footer className="bg-[#171717] border-t border-[#3a3a3c] pt-[21px] pb-6">
    <form className="flex items-center pl-10 pr-[51px] text-[#349fff]">
      <button type="button" aria-label="附件"><PlusIcon /></button>
      <div className="flex items-center flex-1 min-w-0 h-[93px] ml-[41px] mr-14 pl-9 pr-[34px] rounded-full border border-[#464648] bg-[#2c2c2e]">
        <input type="text" aria-label="訊息" className="flex-1 min-w-0 bg-transparent text-[48px] text-white outline-none" />
        <button type="button" aria-label="貼圖"><StickerIcon /></button>
      </div>
      <button type="button" aria-label="相機"><CameraIcon /></button>
      <button type="button" aria-label="錄音" className="ml-[60px]"><MicIcon /></button>
    </form>
    <div className="w-[417px] h-[15px] mx-auto mt-[84px] rounded-full bg-white"></div>
  </footer>
);

const App: React.FC = () => {
  return (
    <div className="flex flex-col min-h-screen bg-black font-['Inter','Noto_Sans_CJK_TC',sans-serif]" lang="zh-HK">
      <Header />
      <main className="relative flex-1 overflow-hidden bg-linear-to-b from-[#0f0e13] via-[#050506] via-45% to-[#000001] pb-[21px]">
        <Wallpaper />
        <div className="relative flex flex-col px-12">
          {/* tail end of the message scrolled under the header */}
          <div className="w-[354px] h-[105px] -mt-[98px] mb-9 rounded-[40px] bg-[#363638]"></div>
          <Thread messages={EARLIER} />
          <div className="self-center w-[300px] mt-[105px] mb-[39px] rounded-3xl bg-[#1a1a1b] text-center text-[38px] leading-[60px] font-bold text-[#98989a]">
            今天
          </div>
          <Thread messages={TODAY} />
        </div>
      </main>
      <Composer />
    </div>
  );
};

export default App;
